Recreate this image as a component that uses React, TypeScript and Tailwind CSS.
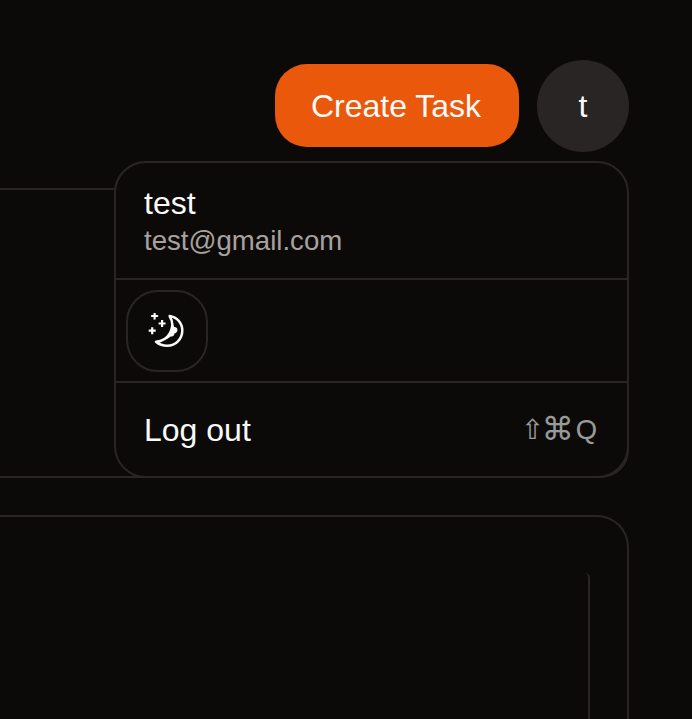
function MoonIcon() {
  return (
    <svg width="36" height="36" viewBox="0 0 36 36" fill="none" stroke="#fafaf9">
      <path d="M21.6 3.1C29 4.2 34.3 10 34.3 17.6C34.3 26 27.7 32.8 19.2 32.8C14.5 32.8 10.8 31.2 8 28.8C14.5 28.2 19.2 24.8 21.8 20.3C25.3 14.2 24.4 7.5 21.6 3.1Z" strokeWidth="2.5" strokeLinejoin="round" />
      <path d="M23.8 9L26.2 13.9C28.4 13.8 29.8 15.3 29.4 17.4C29.1 19.2 27.8 20.2 26.4 20.4C26.2 22.6 25 23.7 22.8 23.4L19.5 25.8L15.5 27.3L22 20Z" fill="#fafaf9" stroke="none" />
      <path d="M6.6-.5V6.5M3.1 3H10.1M14.1 7V14M10.6 10.5H17.6M4.2 14.2V21.2M.7 17.7H7.7" strokeWidth="2.2" />
    </svg>
  );
}

export default function App() {
  return (
    <div className="h-[719px] w-[692px] overflow-hidden bg-[#0c0a09] pt-[59px] font-['Liberation_Sans',Arial,sans-serif] text-[32px] text-[#fafaf9]">
      <header className="flex h-[93px] items-center justify-end gap-[18px] pr-[63px]">
        <button className="h-[83px] w-[244px] rounded-[32px] bg-[#ea580c] pr-[2px] leading-[46px]">Create Task</button>
        <div className="relative">
          <div className="flex size-[92px] items-center justify-center rounded-full bg-[#292524]">t</div>
          <div className="absolute top-[101px] right-0 z-10 flex h-[317px] w-[515px] flex-col overflow-hidden rounded-[32px] border-2 border-[#292524] bg-[#0c0a09]">
            <div className="h-[117px] shrink-0 border-b-2 border-[#292524] px-7 pt-6">
              <p className="leading-[32px]">test</p>
              <p className="mt-[6px] text-[27.6px] leading-[32px] text-[#a8a29e]">test@gmail.com</p>
            </div>
            <div className="h-[103px] shrink-0 border-b-2 border-[#292524] pt-[10px] pl-[10px]">
              <button className="flex size-[82px] items-center justify-center rounded-[32px] border-2 border-[#292524] pr-[2px]"><MoonIcon /></button>
            </div>
            <div className="flex flex-1 items-center justify-between pt-[1px] pr-[30px] pl-[28px]">
              <span className="leading-[36px]">Log out</span>
              <span className="flex h-[36px] items-center font-['Liberation_Sans','DejaVu_Sans',sans-serif] text-[27.43px] leading-[36px] opacity-60">
                <span className="w-[21px]">⇧</span>
                <span className="mb-[2px] w-[34px] text-[32px]">⌘</span>
                <span>Q</span>
              </span>
            </div>
          </div>
        </div>
      </header>
      <main className="flex flex-col gap-[37px] pt-[36px] pr-[63px]">
        <section className="h-[290px] rounded-r-[28px] border-y-2 border-r-2 border-[#292524]" />
        <section className="h-[240px] rounded-tr-[32px] border-t-2 border-r-2 border-[#292524] pt-[56px] pr-[37px]">
          <div className="h-[200px] rounded-tr-[5px] border-r-2 border-[#292524]" />
        </section>
      </main>
    </div>
  );
}
